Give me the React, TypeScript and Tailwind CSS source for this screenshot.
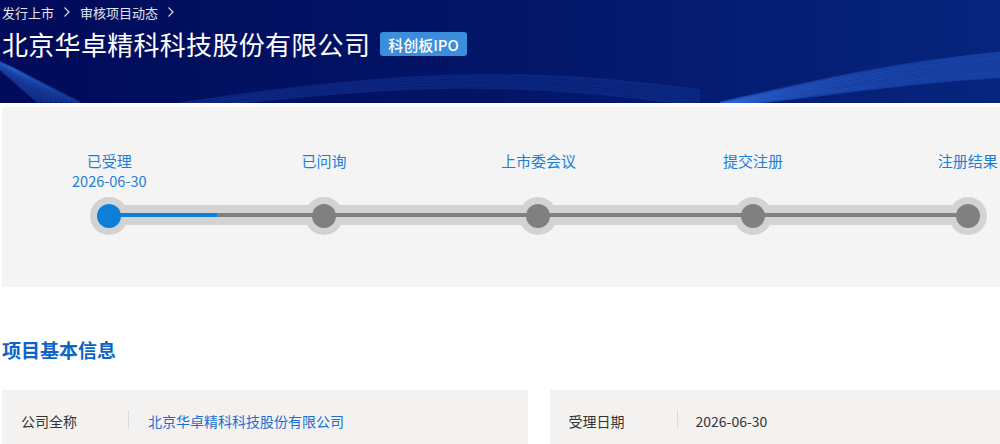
import React from 'react';

const steps = [
  { label: '已受理', date: '2026-06-30', done: true },
  { label: '已问询' },
  { label: '上市委会议' },
  { label: '提交注册' },
  { label: '注册结果' },
];

const font = { fontFamily: '"Noto Sans CJK SC", "Noto Sans", sans-serif' };

function Chevron() {
  return (
    <svg width="8" height="12" viewBox="0 0 8 12" className="mx-[9px]">
      <path d="M1.5 1.5 L6 6 L1.5 10.5" fill="none" stroke="#d8dbe6" strokeWidth="1.2" />
    </svg>
  );
}

function HeaderWaves() {
  const lines = Array.from({ length: 9 });
  return (
    <svg className="absolute inset-0 w-full h-full" viewBox="0 0 1000 103" preserveAspectRatio="none">
      {lines.map((_, i) => (
        <path
          key={'a' + i}
          d={`M${-20 + i * 4} ${52 + i * 2} L${40 + i * 5} 103`}
          stroke="#2f6fe0"
          strokeOpacity={0.35}
          strokeWidth="3"
          fill="none"
        />
      ))}
      {lines.map((_, i) => (
        <path
          key={'b' + i}
          d={`M180 ${103 + i} C 400 ${70 + i * 1.5}, 520 ${66 + i * 1.8}, 700 ${90 + i * 2}`}
          stroke="#2d62d8"
          strokeOpacity={0.22}
          strokeWidth="1.5"
          fill="none"
        />
      ))}
      {lines.map((_, i) => (
        <path
          key={'c' + i}
          d={`M720 ${103 + i * 0.5} C 820 ${80 + i * 2}, 900 ${62 + i * 2.5}, 1010 ${52 + i * 3}`}
          stroke="#3470e6"
          strokeOpacity={0.35}
          strokeWidth="3"
          fill="none"
        />
      ))}
    </svg>
  );
}

export default function App() {
  return (
    <div className="w-[1000px] h-[444px] overflow-hidden bg-white" style={font}>
      {/* Header */}
      <header className="relative h-[103px] bg-gradient-to-r from-[#010b5a] via-[#031567] to-[#07257e] overflow-hidden">
        <HeaderWaves />
        <div className="relative pl-[2px]">
          <div className="flex items-center h-[24px] text-[13px] text-[#e3e6ee] leading-none">
            <span>发行上市</span>
            <Chevron />
            <span>审核项目动态</span>
            <Chevron />
          </div>
          <div className="flex items-center mt-[5px] h-[30px]">
            <h1 className="text-[26px] leading-none text-white tracking-[0.3px]">北京华卓精科科技股份有限公司</h1>
            <span className="ml-[10px] h-[24px] px-[8px] flex items-center rounded-[3px] bg-[#3a8edb] text-white text-[15px] font-medium leading-none">
              科创板IPO
            </span>
          </div>
        </div>
      </header>

      <div className="ml-[2px] w-[1073px]">
        {/* Progress */}
        <section className="mt-[4px] h-[180px] bg-[#f4f4f4] pt-[44px]">
          <div className="grid grid-cols-5 h-[46px]">
            {steps.map((s) => (
              <div key={s.label} className="flex flex-col items-center text-[15px] leading-[19px] text-[#1b7fd6]">
                <span>{s.label}</span>
                {s.date && <span className="text-[14.5px] leading-[21px]">{s.date}</span>}
              </div>
            ))}
          </div>
          <div className="relative h-[38px]">
            {/* rings sit behind the track */}
            <div className="grid grid-cols-5 h-full">
              {steps.map((s) => (
                <div key={s.label} className="flex justify-center">
                  <div className="w-[38px] h-[38px] rounded-full bg-[#d3d3d3]" />
                </div>
              ))}
            </div>
            <div className="absolute left-[107px] right-[107px] top-[8px] h-[20px] bg-[#d3d3d3]" />
            <div className="absolute left-[107px] right-[107px] top-[16px] h-[4px] bg-[#808080]" />
            <div className="absolute left-[107px] w-[108px] top-[16px] h-[4px] bg-[#0e7fd8]" />
            {/* dots on top */}
            <div className="absolute inset-0 grid grid-cols-5">
              {steps.map((s) => (
                <div key={s.label} className="flex items-center justify-center">
                  <div className={`w-[24px] h-[24px] rounded-full ${s.done ? 'bg-[#0e7fd8]' : 'bg-[#808080]'}`} />
                </div>
              ))}
            </div>
          </div>
        </section>

        {/* Basic info */}
        <h2 className="mt-[51px] text-[19px] leading-[24px] font-bold text-[#0b64c6]">项目基本信息</h2>

        <div className="mt-[28px] grid grid-cols-2 gap-[22px]">
          <div className="h-[70px] bg-[#f3f2f1] flex items-start pt-[21px] text-[14px] leading-[20px]">
            <span className="w-[126px] pl-[19px] text-[#333]">公司全称</span>
            <span className="w-px h-[19px] bg-[#d9d9d9] mt-[-1px]" />
            <span className="pl-[19px] text-[#1a6fd1]">北京华卓精科科技股份有限公司</span>
          </div>
          <div className="h-[70px] bg-[#f3f2f1] flex items-start pt-[21px] text-[14px] leading-[20px]">
            <span className="w-[127px] pl-[19px] text-[#333]">受理日期</span>
            <span className="w-px h-[19px] bg-[#d9d9d9] mt-[-1px]" />
            <span className="pl-[18px] text-[#333]">2026-06-30</span>
          </div>
        </div>
      </div>
    </div>
  );
}
